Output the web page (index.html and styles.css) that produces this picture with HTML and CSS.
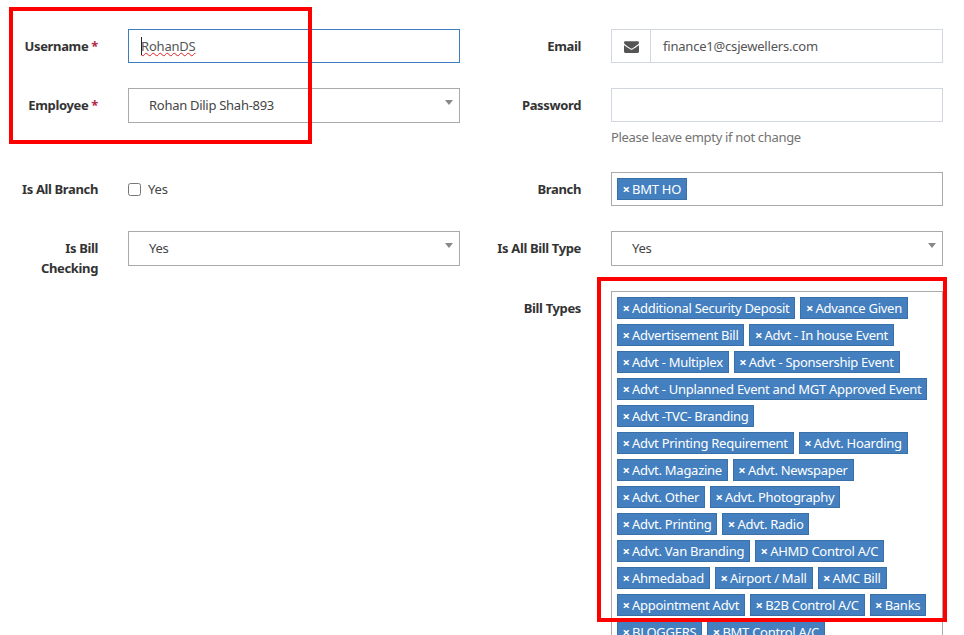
FILE: index.html
```html
<!DOCTYPE html>
<html lang="en">
<head>
<meta charset="utf-8">
<title>Edit User</title>
<link rel="stylesheet" href="styles.css">
</head>
<body>
<form class="form">
  <div class="row">
    <div class="group group-left">
      <label class="label">Username <span class="req">*</span></label>
      <div class="control input focused"><span class="caret"></span><span class="misspelt">RohanDS</span></div>
    </div>
    <div class="group group-right">
      <label class="label">Email</label>
      <div class="control input-group">
        <span class="addon">
          <svg class="envelope" viewBox="0 0 1792 1792" aria-hidden="true"><path d="M1792 710v794q0 66-47 113t-113 47h-1472q-66 0-113-47t-47-113v-794q44 49 101 87 362 246 497 345 57 42 92.5 65.5t94.5 48 110 24.5h2q51 0 110-24.5t94.5-48 92.5-65.5q170-123 498-345 57-39 100-87zm0-294q0 79-49 151t-122 123q-376 261-468 325-10 7-42.5 30.5t-54 38-52 32.5-57.5 27-50 9h-2q-23 0-50-9t-57.5-27-52-32.5-54-38-42.5-30.5q-91-64-262-182.5t-205-142.5q-62-42-117-115.5t-55-136.5q0-78 41.5-130t118.5-52h1472q65 0 112.5 47t47.5 113z"/></svg>
        </span>
        <span class="group-value">finance1@csjewellers.com</span>
      </div>
    </div>
  </div>

  <div class="row">
    <div class="group group-left">
      <label class="label">Employee <span class="req">*</span></label>
      <div class="control select"><span>Rohan Dilip Shah-893</span><i class="arrow"></i></div>
    </div>
    <div class="group group-right">
      <label class="label">Password</label>
      <div class="control-wrap">
        <div class="control input"></div>
        <p class="help">Please leave empty if not change</p>
      </div>
    </div>
  </div>

  <div class="row">
    <div class="group group-left">
      <label class="label">Is All Branch</label>
      <div class="control check"><input type="checkbox" class="checkbox"><span>Yes</span></div>
    </div>
    <div class="group group-right">
      <label class="label">Branch</label>
      <div class="control tags tags-single">
        <span class="tag"><b>×</b>BMT HO</span>
      </div>
    </div>
  </div>

  <div class="row row-select">
    <div class="group group-left">
      <label class="label">Is Bill<br>Checking</label>
      <div class="control select"><span>Yes</span><i class="arrow"></i></div>
    </div>
    <div class="group group-right">
      <label class="label">Is All Bill Type</label>
      <div class="control select"><span>Yes</span><i class="arrow"></i></div>
    </div>
  </div>

  <div class="row">
    <div class="group group-left"></div>
    <div class="group group-right">
      <label class="label">Bill Types</label>
      <div class="control tags">
        <span class="tag"><b>×</b>Additional Security Deposit</span>
        <span class="tag"><b>×</b>Advance Given</span>
        <span class="tag"><b>×</b>Advertisement Bill</span>
        <span class="tag"><b>×</b>Advt - In house Event</span>
        <span class="tag"><b>×</b>Advt - Multiplex</span>
        <span class="tag"><b>×</b>Advt - Sponsership Event</span>
        <span class="tag"><b>×</b>Advt - Unplanned Event and MGT Approved Event</span>
        <span class="tag"><b>×</b>Advt -TVC- Branding</span>
        <span class="tag"><b>×</b>Advt Printing Requirement</span>
        <span class="tag"><b>×</b>Advt. Hoarding</span>
        <span class="tag"><b>×</b>Advt. Magazine</span>
        <span class="tag"><b>×</b>Advt. Newspaper</span>
        <span class="tag"><b>×</b>Advt. Other</span>
        <span class="tag"><b>×</b>Advt. Photography</span>
        <span class="tag"><b>×</b>Advt. Printing</span>
        <span class="tag"><b>×</b>Advt. Radio</span>
        <span class="tag"><b>×</b>Advt. Van Branding</span>
        <span class="tag"><b>×</b>AHMD Control A/C</span>
        <span class="tag"><b>×</b>Ahmedabad</span>
        <span class="tag"><b>×</b>Airport / Mall</span>
        <span class="tag"><b>×</b>AMC Bill</span>
        <span class="tag"><b>×</b>Appointment Advt</span>
        <span class="tag"><b>×</b>B2B Control A/C</span>
        <span class="tag"><b>×</b>Banks</span>
        <span class="tag"><b>×</b>BLOGGERS</span>
        <span class="tag"><b>×</b>BMT Control A/C</span>
      </div>
    </div>
  </div>
</form>
<div class="highlight highlight-a"></div>
<div class="highlight highlight-b"></div>
</body>
</html>
```
FILE: styles.css
```css
html, body {
  margin: 0;
  height: 635px;
  overflow: hidden;
  background: #fff;
}
body {
  position: relative;
  font-family: "Noto Sans", sans-serif;
  font-size: 13px;
  letter-spacing: -0.2px;
  line-height: 20px;
  color: #333;
}
.form {
  padding: 29px 0 0 15px;
}
.row {
  display: flex;
  margin-bottom: 25px;
}
.row-select {
  height: 35px;
}
.group {
  display: flex;
  align-items: flex-start;
}
.group-left {
  width: 445px;
  margin-right: 21px;
}
.group-right {
  width: 462px;
}
.label {
  flex: none;
  padding-top: 7px;
  margin-right: 30px;
  text-align: right;
  font-weight: 700;
  letter-spacing: -0.36px;
}
.group-left .label { width: 83px; }
.group-right .label { width: 100px; }
.req { color: #b3294d; }
.control,
.control-wrap {
  flex: none;
  width: 332px;
  box-sizing: border-box;
}
.input {
  height: 34px;
  border: 1px solid #d2d6de;
  padding: 6px 12px;
  color: #555;
  position: relative;
}
.focused { border-color: #3c7ebf; }
.caret {
  position: absolute;
  left: 12px;
  top: 7px;
  width: 1px;
  height: 18px;
  background: #222;
}
.misspelt {
  text-decoration: underline wavy #e02020 1px;
  text-underline-offset: 1px;
}
.input-group {
  height: 34px;
  display: flex;
  border: 1px solid #d2d6de;
  color: #555;
}
.addon {
  width: 38px;
  flex: none;
  display: flex;
  align-items: center;
  justify-content: center;
  border-right: 1px solid #d2d6de;
}
.envelope {
  width: 15px;
  height: 15px;
  fill: #555;
}
.group-value {
  padding: 6px 12px;
}
.select {
  height: 35px;
  border: 1px solid #aaa;
  padding: 6px 20px;
  color: #444;
  position: relative;
  letter-spacing: -0.28px;
}
.arrow {
  position: absolute;
  right: 6px;
  top: 11px;
  border-style: solid;
  border-width: 5px 4px 0;
  border-color: #888 transparent transparent;
}
.help {
  margin: 5px 0 0;
  color: #737373;
  letter-spacing: -0.33px;
}
.check {
  display: flex;
  align-items: center;
  height: 34px;
  color: #444;
}
.checkbox {
  width: 13px;
  height: 13px;
  margin: 0 7px 0 0;
}
.tags {
  display: flex;
  flex-wrap: wrap;
  align-content: flex-start;
  border: 1px solid #aaa;
  padding: 5px 5px 0;
  min-height: 34px;
}
.tag {
  display: flex;
  align-items: center;
  height: 22px;
  box-sizing: border-box;
  margin: 0 5px 5px 0;
  padding: 0 5px 0 4px;
  background: #447fbf;
  border: 1px solid #3a70a8;
  color: #fff;
  letter-spacing: -0.27px;
}
.tag b {
  margin-right: 2px;
  width: 8px;
  text-align: center;
  font-size: 13px;
}
.highlight {
  position: absolute;
  box-sizing: border-box;
  border: 4px solid #f00;
}
.highlight-a {
  left: 9px;
  top: 7px;
  width: 303px;
  height: 137px;
}
.highlight-b {
  left: 597px;
  top: 277px;
  width: 350px;
  height: 345px;
}
```
